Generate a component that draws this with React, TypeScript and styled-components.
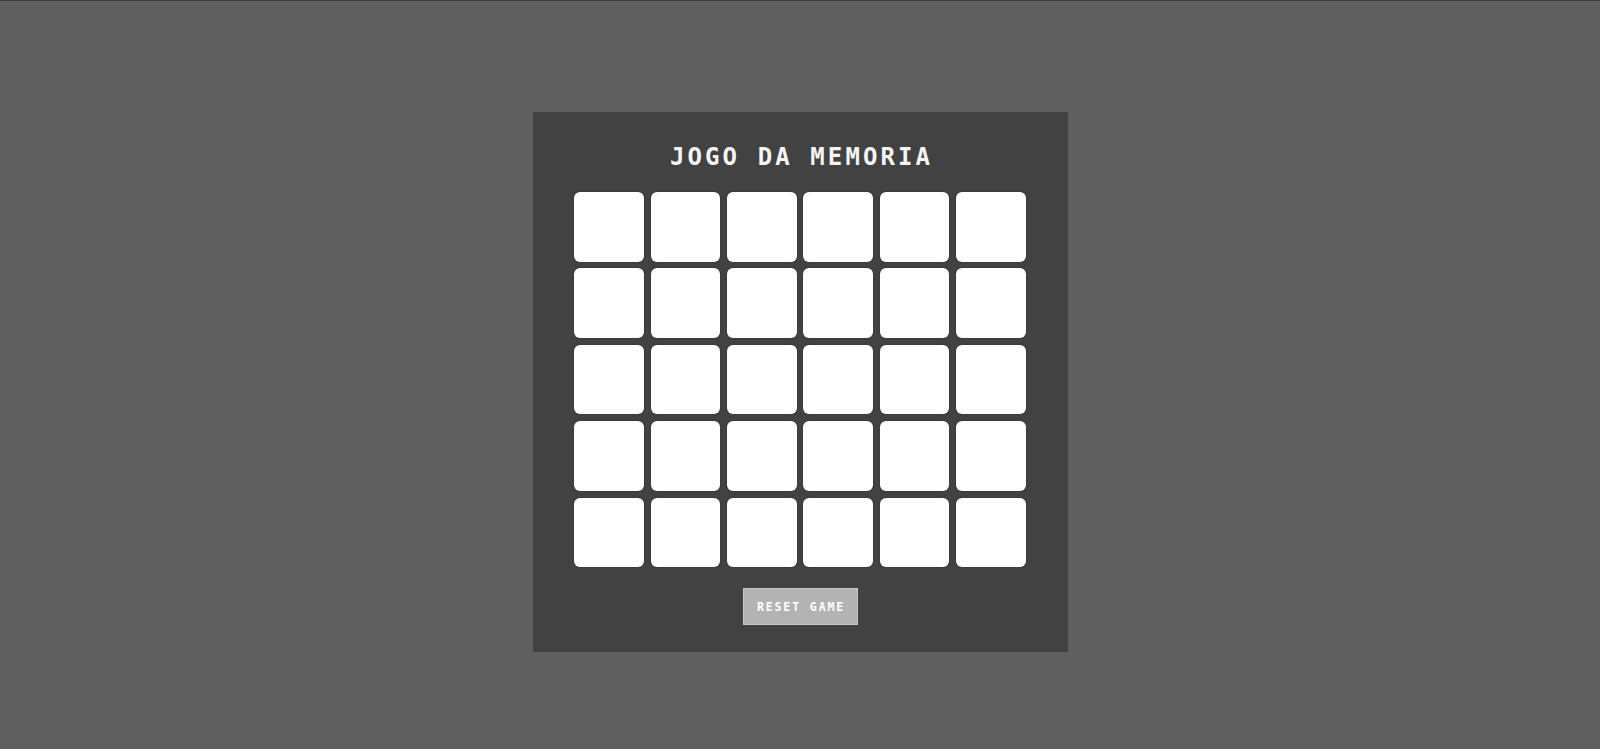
import React from "react";
import styled, { createGlobalStyle } from "styled-components";

const Global = createGlobalStyle`
  html, body { margin: 0; padding: 0; background: #5f5f5f; }
  body { font-family: "DejaVu Sans Mono", monospace; }
`;

const Page = styled.div`
  min-height: 749px;
  box-sizing: border-box;
  border-top: 1px solid #3a3e3a;
  display: flex;
  justify-content: center;
  align-items: flex-start;
  padding-top: 111px;
`;

const Panel = styled.main`
  width: 535px;
  height: 540px;
  box-sizing: border-box;
  background: #424242;
  padding: 30px 0 27px;
  display: flex;
  flex-direction: column;
  align-items: center;
`;

const Title = styled.h1`
  margin: 0;
  font-family: "DejaVu Sans Mono", monospace;
  font-weight: bold;
  font-size: 24px;
  line-height: 30px;
  letter-spacing: 3.1px;
  color: #f4f4f4;
  padding-left: 3.1px;
`;

const Grid = styled.div`
  margin-top: 20px;
  display: grid;
  grid-template-columns: repeat(6, 69.6px);
  grid-auto-rows: 69.6px;
  gap: 6.8px;
`;

const Card = styled.div`
  background: #ffffff;
  border-radius: 6px;
  box-shadow: 0 0 2px rgba(0, 0, 0, 0.35);
`;

const ResetButton = styled.button`
  margin-top: 21px;
  width: 115px;
  height: 37px;
  box-sizing: border-box;
  background: #b3b3b3;
  border: 1px solid #c6c6c6;
  color: #ffffff;
  font-family: "DejaVu Sans Mono", monospace;
  font-weight: bold;
  font-size: 11.5px;
  letter-spacing: 1.9px;
  padding: 0 0 0 2px;
  cursor: pointer;
`;

export default function App() {
  const cards = Array.from({ length: 30 }, (_, i) => i);
  return (
    <>
      <Global />
      <Page>
        <Panel>
          <Title>JOGO DA MEMORIA</Title>
          <Grid>
            {cards.map((i) => (
              <Card key={i} />
            ))}
          </Grid>
          <ResetButton>RESET GAME</ResetButton>
        </Panel>
      </Page>
    </>
  );
}
